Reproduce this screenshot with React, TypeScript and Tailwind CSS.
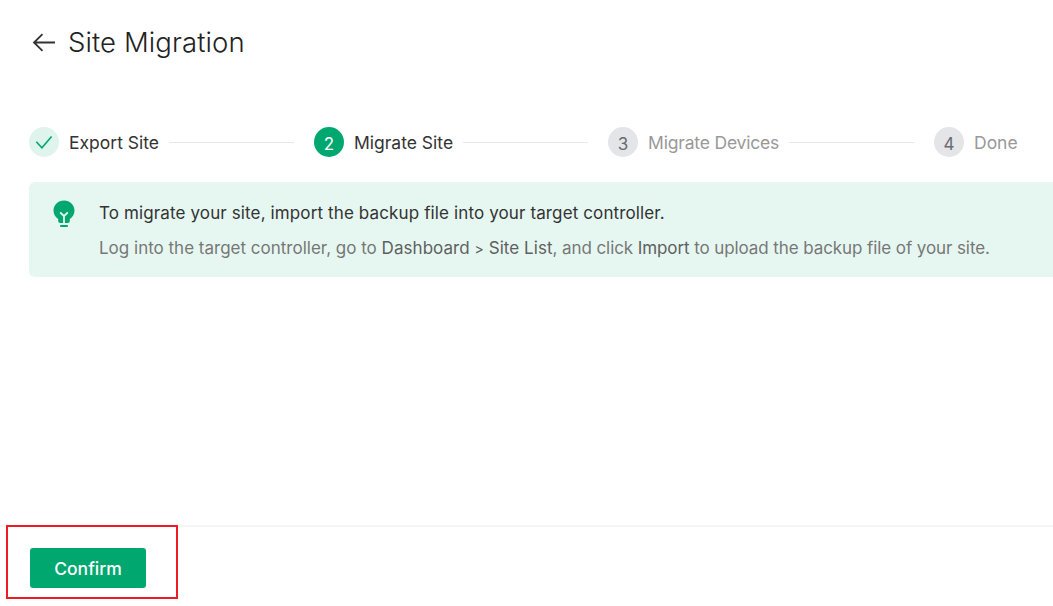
const steps = [
  { label: 'Export Site', state: 'done', width: 'w-[90px]' },
  { label: 'Migrate Site', state: 'active', width: 'w-[99px]' },
  { label: 'Migrate Devices', state: 'pending', width: 'w-[131px] tracking-[-0.18px]' },
  { label: 'Done', state: 'pending', width: 'w-[44px]' },
]

const circle: Record<string, string> = {
  done: 'bg-[#def4ec] text-[#00a870]',
  active: 'bg-[#00a870] text-white',
  pending: 'bg-[#e4e5e9] text-[#6a6b70]',
}

function BackIcon() {
  return (
    <svg className="h-[20px] w-[24px]" viewBox="0 0 24 20" fill="none" stroke="currentColor" strokeWidth="1.8">
      <path d="M23 9.5H2M10.5 1.2 2 9.5l8.5 8.3" />
    </svg>
  )
}

function CheckIcon() {
  return (
    <svg className="h-[30px] w-[30px]" viewBox="0 0 30 30" fill="none" stroke="currentColor" strokeWidth="1.6">
      <path d="m7.3 14.8 5.6 6L22.6 9.4" />
    </svg>
  )
}

function BulbIcon() {
  return (
    <svg className="h-[28px] w-[22px]" viewBox="0 0 22 28" fill="none">
      <path fill="#00a870" d="M11 .5C4.9.5.5 5 .5 10.6c0 4 2 6.6 4.7 8.4V21q0 2 2 2h7.6q2 0 2-2v-2c2.7-1.8 4.7-4.4 4.7-8.4C21.5 5 17.1.5 11 .5Z" />
      <path stroke="#e6f7f1" strokeWidth="1.8" d="M7.2 12.5 11 16l3.8-3.5M11 16v7" />
      <path fill="#00a870" d="M7.2 25h7.6v2H7.2z" />
    </svg>
  )
}

export default function App() {
  return (
    <div className="flex h-screen flex-col overflow-hidden bg-white font-['Inter',sans-serif] text-[#333]">
      <header className="flex items-center pt-[26px] pl-8">
        <BackIcon />
        <h1 className="ml-3 pb-0.5 text-[27.5px] leading-[32px] font-[350] tracking-[0.1px] whitespace-nowrap text-[#222]">Site Migration</h1>
      </header>

      {/* Step bar */}
      <ol className="mt-[67px] flex h-[30px] items-center pl-[29px]">
        {steps.map((step, i) => (
          <li key={step.label} className="flex shrink-0 items-center">
            <span className={`flex h-[30px] w-[30px] items-center justify-center rounded-full text-[17px] leading-[30px] ${circle[step.state]}`}>
              {step.state === 'done' ? <CheckIcon /> : <span className="pt-[3px]">{i + 1}</span>}
            </span>
            <span className={`ml-2.5 pt-px text-[17.5px] leading-[26px] whitespace-nowrap ${step.width} ${step.state === 'pending' ? 'text-[#999]' : ''}`}>
              {step.label}
            </span>
            {i < steps.length - 1 && <span className="mt-px mr-5 ml-2.5 h-px w-[125px] bg-[#e8e8e8]" />}
          </li>
        ))}
      </ol>

      {/* Hint */}
      <section className="mt-[25px] ml-[29px] flex h-[95px] rounded-l-md bg-[#e6f7f1] pt-[18px] pl-6">
        <BulbIcon />
        <div className="ml-6 pt-px text-[17px] whitespace-nowrap">
          <p className="leading-6 tracking-[0.125px]">To migrate your site, import the backup file into your target controller.</p>
          <p className="mt-[11px] leading-6 tracking-[-0.09px] text-[#777]">
            <span className="tracking-normal">Log into the target controller, go to </span>
            <span className="tracking-[0.05px] text-[#606060]">
              Dashboard <span className="text-[14px]">&gt;</span> Site List
            </span>
            , and click <span className="text-[#606060]">Import</span> to upload the backup file of your site.
          </p>
        </div>
      </section>

      {/* Action bar */}
      <footer className="mt-auto h-[81px] border-t-2 border-[#f5f5f5]">
        <div className="-mt-[2px] ml-[6px] h-[74px] w-[172px] border-2 border-[#ed1c24] pt-[21px] pl-[22px]">
          <button className="h-10 w-[116px] rounded-[3px] bg-[#00a870] pt-0.5 text-[17.5px] font-medium text-white">Confirm</button>
        </div>
      </footer>
    </div>
  )
}
